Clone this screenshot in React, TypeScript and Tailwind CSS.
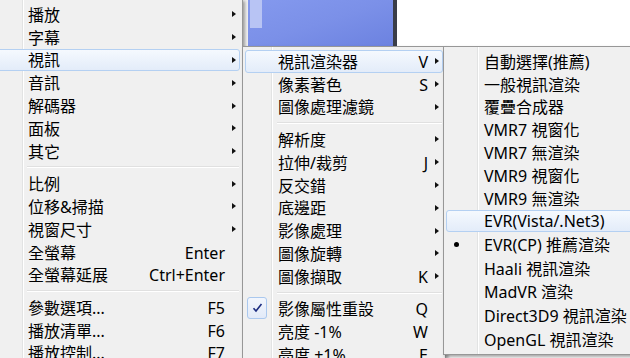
import React from "react";

type Item =
  | "sep"
  | {
      label: string;
      shortcut?: string;
      arrow?: boolean;
      hl?: boolean;
      checked?: boolean;
      bullet?: boolean;
      tall?: boolean;
    };

const mainMenu: Item[] = [
  { label: "播放", arrow: true },
  { label: "字幕", arrow: true },
  { label: "視訊", arrow: true, hl: true },
  { label: "音訊", arrow: true },
  { label: "解碼器", arrow: true },
  { label: "面板", arrow: true },
  { label: "其它", arrow: true },
  "sep",
  { label: "比例", arrow: true },
  { label: "位移&掃描", arrow: true },
  { label: "視窗尺寸", arrow: true },
  { label: "全螢幕", shortcut: "Enter" },
  { label: "全螢幕延展", shortcut: "Ctrl+Enter" },
  "sep",
  { label: "參數選項...", shortcut: "F5" },
  { label: "播放清單...", shortcut: "F6" },
  { label: "播放控制...", shortcut: "F7" },
];

const videoMenu: Item[] = [
  { label: "視訊渲染器", shortcut: "V", arrow: true, hl: true },
  { label: "像素著色", shortcut: "S", arrow: true },
  { label: "圖像處理濾鏡", arrow: true },
  "sep",
  { label: "解析度", arrow: true },
  { label: "拉伸/裁剪", shortcut: "J", arrow: true },
  { label: "反交錯", arrow: true },
  { label: "底邊距", arrow: true },
  { label: "影像處理", arrow: true },
  { label: "圖像旋轉", arrow: true },
  { label: "圖像擷取", shortcut: "K", arrow: true },
  "sep",
  { label: "影像屬性重設", shortcut: "Q", checked: true },
  { label: "亮度 -1%", shortcut: "W" },
  { label: "亮度 +1%", shortcut: "E" },
];

const rendererMenu: Item[] = [
  { label: "自動選擇(推薦)" },
  { label: "一般視訊渲染" },
  { label: "覆疊合成器" },
  { label: "VMR7 視窗化" },
  { label: "VMR7 無渲染" },
  { label: "VMR9 視窗化" },
  { label: "VMR9 無渲染" },
  { label: "EVR(Vista/.Net3)", hl: true },
  { label: "EVR(CP) 推薦渲染", bullet: true, tall: true },
  { label: "Haali 視訊渲染", tall: true },
  { label: "MadVR 渲染", tall: true },
  { label: "Direct3D9 視訊渲染", tall: true },
  { label: "OpenGL 視訊渲染", tall: true },
];

function Arrow() {
  return <div className="h-0 w-0 border-y-[3.5px] border-l-[4px] border-y-transparent border-l-[#111]" />;
}

function Menu({
  items,
  iconCol,
  gutter,
  className,
}: {
  items: Item[];
  iconCol: number;
  gutter: number;
  className: string;
}) {
  return (
    <div
      className={`absolute border border-[#979797] bg-[#f0f0f0] px-[2px] py-[3px] shadow-[2px_2px_3px_rgba(0,0,0,0.35)] ${className}`}
    >
      {/* gutter line */}
      <div
        className="absolute top-0 bottom-0 w-[2px] border-l border-l-[#e2e3e3] border-r border-r-white"
        style={{ left: gutter }}
      />
      {items.map((item, i) =>
        item === "sep" ? (
          <div key={i} className="relative flex h-[9.7px] flex-col justify-center pr-[1px]" style={{ paddingLeft: iconCol - 1 }}>
            <div className="h-[1px] bg-[#e0e0e0]" />
            <div className="h-[1px] bg-white" />
          </div>
        ) : (
          <div
            key={i}
            className={
              (item.tall ? "h-[23.8px] " : "h-[22.8px] ") +
              (item.hl
                ? "relative flex items-center rounded-[3px] border border-[#b4d0f2] bg-gradient-to-b from-[#f5f9fe] to-[#e3ecf9]"
                : "relative flex items-center border border-transparent")
            }
          >
            <div className="flex h-full shrink-0 items-center justify-center" style={{ width: iconCol - 1 }}>
              {item.checked && (
                <div className="mr-[10px] -mt-[2px] flex h-[22px] w-[20px] items-center justify-center rounded-[3px] border border-[#aac8ee] bg-gradient-to-b from-[#f2f6fd] to-[#e2eaf8]">
                  <svg width="11" height="10" viewBox="0 0 11 10">
                    <path d="M1.5 5.2 L4 8 L9.5 1" fill="none" stroke="#1c2c80" strokeWidth="1.6" />
                  </svg>
                </div>
              )}
              {item.bullet && <div className="mr-[18px] h-[5px] w-[5px] rounded-full bg-black" />}
            </div>
            <div className="flex-1 whitespace-nowrap pt-[1px]">{item.label}</div>
            {item.shortcut && <div className="whitespace-nowrap pt-[1px]">{item.shortcut}</div>}
            <div className="flex w-[14px] shrink-0 items-center justify-center pl-[3px]">{item.arrow && <Arrow />}</div>
          </div>
        )
      )}
    </div>
  );
}

export default function App() {
  return (
    <div
      className="relative h-[358px] w-[630px] overflow-hidden bg-white text-[16px] leading-none text-black"
      style={{ fontFamily: '"Noto Sans", "Noto Sans CJK TC", sans-serif' }}
    >
      {/* desktop behind the menus */}
      <div className="flex h-[46px]">
        <div className="w-[248px] bg-[#f0f0f0]" />
        <div className="relative w-[145px] bg-gradient-to-br from-[#8499ee] via-[#7b90e8] to-[#6c82e0]">
          <div className="ml-[2px] h-[28px] w-[12px] bg-[#b8c4f4]" />
        </div>
        <div className="w-[4px] bg-[#3a3d48]" />
        <div className="flex-1 bg-white" />
      </div>

      <Menu items={mainMenu} iconCol={32} gutter={28} className="-left-[7px] -top-[1px] w-[250px]" />
      <Menu items={videoMenu} iconCol={33} gutter={28} className="left-[242px] top-[46px] w-[204px]" />
      <Menu items={rendererMenu} iconCol={38} gutter={33} className="left-[443px] top-[46px] w-[200px]" />
    </div>
  );
}
